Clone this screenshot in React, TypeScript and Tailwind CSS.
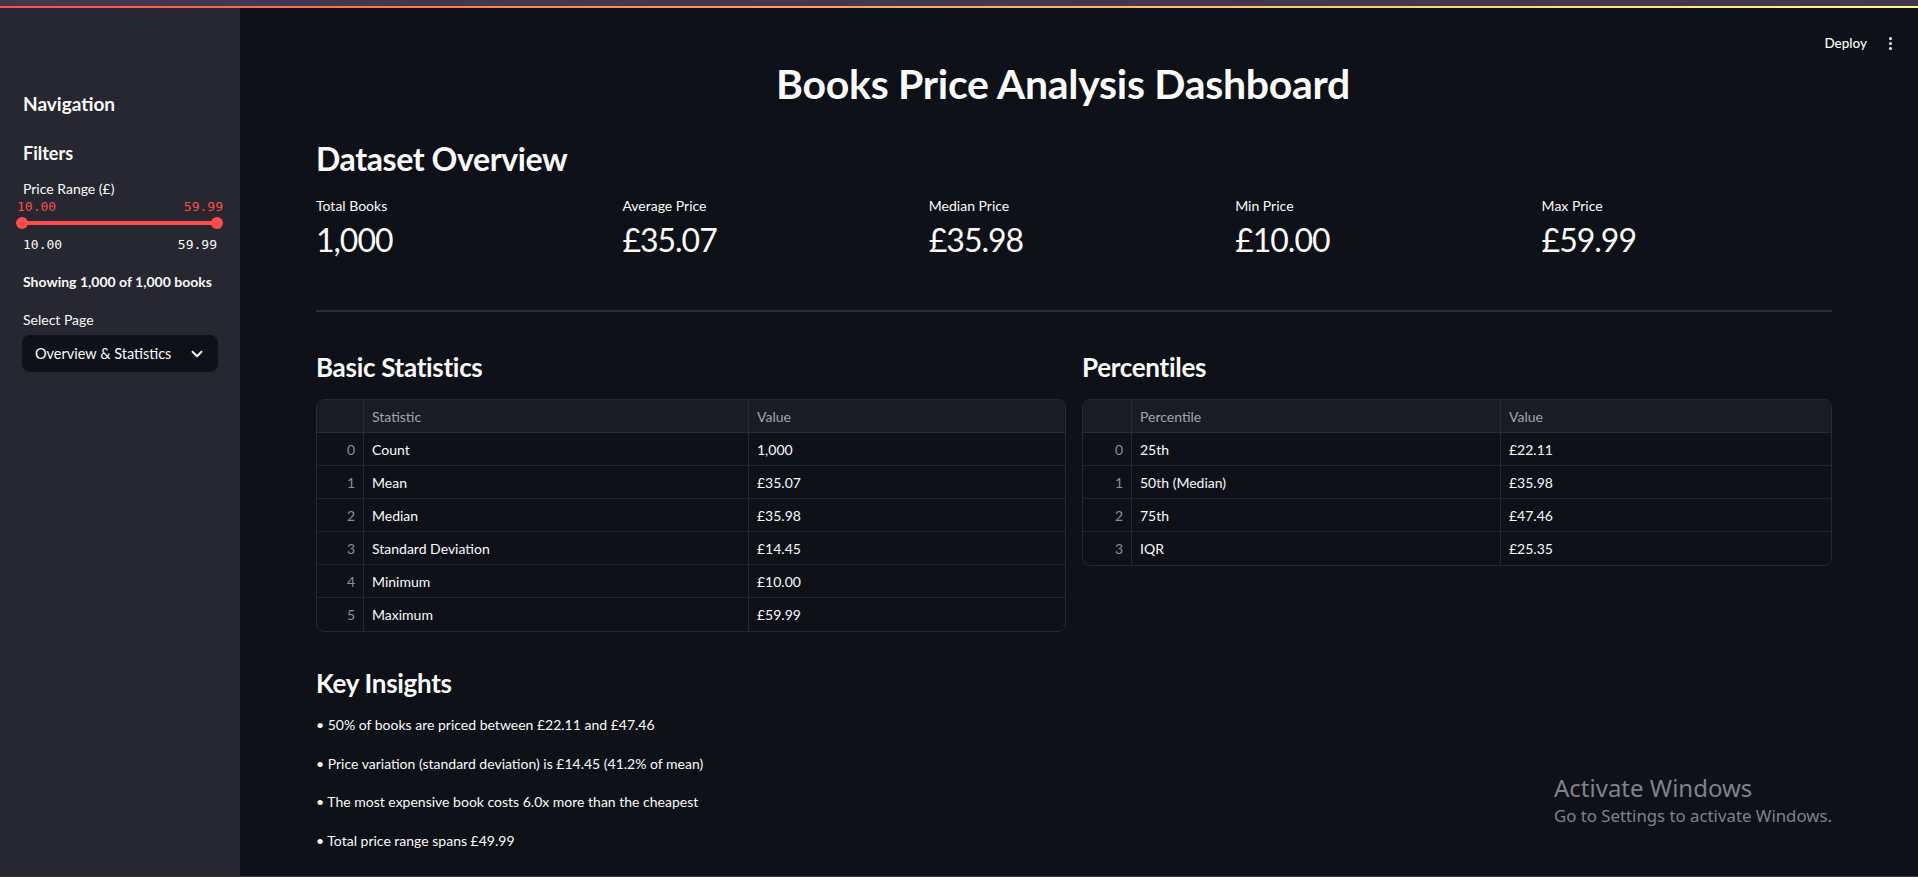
import { ChevronDown } from "lucide-react";

const basicRows = [
  ["Count", "1,000"],
  ["Mean", "£35.07"],
  ["Median", "£35.98"],
  ["Standard Deviation", "£14.45"],
  ["Minimum", "£10.00"],
  ["Maximum", "£59.99"],
];

const percentileRows = [
  ["25th", "£22.11"],
  ["50th (Median)", "£35.98"],
  ["75th", "£47.46"],
  ["IQR", "£25.35"],
];

const metrics = [
  ["Total Books", "1,000"],
  ["Average Price", "£35.07"],
  ["Median Price", "£35.98"],
  ["Min Price", "£10.00"],
  ["Max Price", "£59.99"],
];

const insights = [
  "50% of books are priced between £22.11 and £47.46",
  "Price variation (standard deviation) is £14.45 (41.2% of mean)",
  "The most expensive book costs 6.0x more than the cheapest",
  "Total price range spans £49.99",
];

function Sidebar() {
  return (
    <aside className="w-[240px] shrink-0 bg-[#262730] pl-[23px] pr-[22px] pt-[84px]">
      <h2 className="h-[24px] text-[19px] font-bold leading-[24px]">Navigation</h2>
      <h3 className="mt-[25px] h-[24px] text-[18px] font-bold leading-[24px]">Filters</h3>
      <p className="mt-[14px] h-[20px] text-[14px] leading-[20px]">Price Range (£)</p>

      <div className="-ml-[6px] -mr-[5px] flex h-[16px] justify-between font-['DejaVu_Sans_Mono',monospace] text-[13px] leading-[16px] text-[#ff4b4b]">
        <span>10.00</span>
        <span>59.99</span>
      </div>
      <div className="-ml-[7px] -mr-[5px] mt-[2px] flex h-[12px] items-center">
        <div className="h-[12px] w-[12px] rounded-full bg-[#ff4b4b]" />
        <div className="-mx-[1px] h-[4px] flex-1 bg-[#ff4b4b]" />
        <div className="h-[12px] w-[12px] rounded-full bg-[#ff4b4b]" />
      </div>
      <div className="mt-[8px] flex h-[16px] justify-between pr-[1px] font-['DejaVu_Sans_Mono',monospace] text-[13px] leading-[16px] text-[#fafafa]">
        <span>10.00</span>
        <span>59.99</span>
      </div>

      <p className="mt-[19px] h-[20px] text-[14px] font-bold leading-[20px]">Showing 1,000 of 1,000 books</p>
      <p className="mt-[18px] h-[20px] text-[14px] leading-[20px]">Select Page</p>
      <div className="-ml-[1px] mt-[5px] flex h-[37px] items-center justify-between rounded-lg bg-[#0e1117] pl-[13px] pr-[12px]">
        <span className="text-[14.5px]">Overview &amp; Statistics</span>
        <ChevronDown size={18} strokeWidth={2.5} className="text-[#fafafa]" />
      </div>
    </aside>
  );
}

function DataTable({
  head,
  rows,
  cols,
}: {
  head: string;
  rows: string[][];
  cols: string;
}) {
  return (
    <div className="overflow-hidden rounded-lg border border-[#262832] text-[14px]">
      <div className={`grid h-[33px] items-center border-b border-[#2b2d36] bg-[#1a1c24] text-[#a2a5ad] ${cols}`}>
        <div className="h-full border-r border-[#262832]" />
        <div className="flex h-full items-center border-r border-[#262832] pl-[8px]">{head}</div>
        <div className="pl-[8px]">Value</div>
      </div>
      {rows.map((r, i) => (
        <div
          key={i}
          className={`grid h-[33px] items-center ${i < rows.length - 1 ? "border-b border-[#22242c]" : ""} ${cols}`}
        >
          <div className="flex h-full items-center justify-end border-r border-[#262832] pr-[8px] text-[#8d8f98]">{i}</div>
          <div className="flex h-full items-center border-r border-[#262832] pl-[8px]">{r[0]}</div>
          <div className="pl-[8px]">{r[1]}</div>
        </div>
      ))}
    </div>
  );
}

export default function App() {
  return (
    <div className="relative flex h-[877px] w-[1918px] flex-col overflow-hidden bg-[#0e1117] font-['Lato',sans-serif] text-[#fafafa]">
      <div className="h-[6px] shrink-0 bg-[#433750]" />
      <div className="h-[2px] shrink-0 bg-gradient-to-r from-[#ff4b4b] to-[#fffd80]" />
      <div className="flex min-h-0 flex-1">
        <Sidebar />
        <main className="relative flex-1 pl-[76px]">
          <div className="absolute right-[26px] top-[17px] flex h-[36px] items-center gap-[22px]">
            <span className="text-[13.5px] font-medium">Deploy</span>
            <div className="flex flex-col gap-[2px]">
              <div className="h-[3px] w-[3px] rounded-full bg-[#fafafa]" />
              <div className="h-[3px] w-[3px] rounded-full bg-[#fafafa]" />
              <div className="h-[3px] w-[3px] rounded-full bg-[#fafafa]" />
            </div>
          </div>

          <div className="w-[1516px] pt-[50px]">
            <h1 className="pr-[22px] text-center text-[41px] font-bold leading-[52px] tracking-[-0.3px]">Books Price Analysis Dashboard</h1>

            <h2 className="mt-[27px] text-[32px] font-bold leading-[44px] tracking-[-0.4px]">Dataset Overview</h2>
            <div className="mt-[15px] grid grid-cols-5 gap-4">
              {metrics.map(([label, value]) => (
                <div key={label}>
                  <div className="h-[20px] text-[14px] leading-[20px]">{label}</div>
                  <div className="mt-[2px] h-[44px] text-[32px] leading-[44px] tracking-[-1px]">{value}</div>
                </div>
              ))}
            </div>

            <div className="mt-[48px] h-[2px] bg-[#2b2d35]" />

            <div className="mt-[37px] grid grid-cols-2 gap-4">
              <div>
                <h3 className="h-[36px] text-[26px] font-bold leading-[36px] tracking-[-0.3px]">Basic Statistics</h3>
                <div className="mt-[14px]">
                  <DataTable head="Statistic" rows={basicRows} cols="grid-cols-[47px_385px_1fr]" />
                </div>
              </div>
              <div>
                <h3 className="h-[36px] text-[26px] font-bold leading-[36px] tracking-[-0.3px]">Percentiles</h3>
                <div className="mt-[14px]">
                  <DataTable head="Percentile" rows={percentileRows} cols="grid-cols-[49px_369px_1fr]" />
                </div>
              </div>
            </div>

            <h3 className="mt-[33px] h-[36px] text-[26px] font-bold leading-[36px] tracking-[-0.3px]">Key Insights</h3>
            <div className="mt-[14px] flex flex-col gap-[18.5px] text-[14px] leading-[20px]">
              {insights.map((t) => (
                <p key={t}>• {t}</p>
              ))}
            </div>
          </div>

          <div className="absolute left-[1314px] top-[767px] font-['Noto_Sans',sans-serif] text-[#80828a]">
            <div className="text-[24px] leading-[26px]">Activate Windows</div>
            <div className="mt-[4px] text-[16.8px] leading-[22px]">Go to Settings to activate Windows.</div>
          </div>
        </main>
      </div>
      <div className="h-px shrink-0 bg-[#3a3a3d]" />
    </div>
  );
}
